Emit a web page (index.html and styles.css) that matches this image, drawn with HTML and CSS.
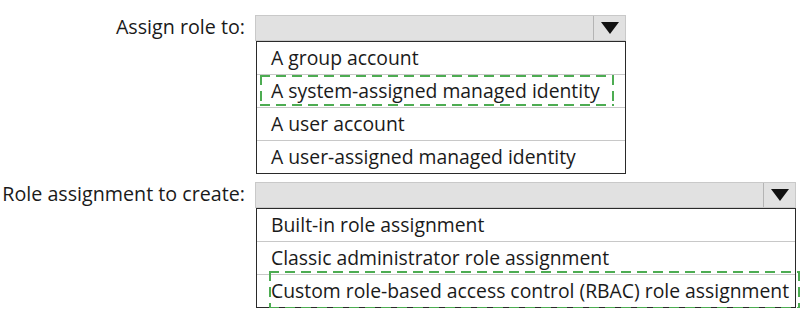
FILE: index.html
```html
<!DOCTYPE html>
<html>
<head>
  <link rel="stylesheet" href="styles.css">
</head>
<body>
  <div class="form">
    <div class="field field-first">
      <div class="label">Assign role to:</div>
      <div class="select select-short">
        <div class="bar">
          <span class="bar-value"></span>
          <span class="bar-arrow"></span>
        </div>
        <ul class="options">
          <li>A group account</li>
          <li class="answer answer-first">A system-assigned managed identity</li>
          <li>A user account</li>
          <li>A user-assigned managed identity</li>
        </ul>
      </div>
    </div>

    <div class="field field-second">
      <div class="label">Role assignment to create:</div>
      <div class="select select-long">
        <div class="bar">
          <span class="bar-value"></span>
          <span class="bar-arrow"></span>
        </div>
        <ul class="options">
          <li>Built-in role assignment</li>
          <li>Classic administrator role assignment</li>
          <li class="answer answer-second">Custom role-based access control (RBAC) role assignment</li>
        </ul>
      </div>
    </div>
  </div>
</body>
</html>
```

FILE: styles.css
```css
body {
  margin: 0;
  padding: 0;
  background-color: #fff;
  font-family: "Open Sans", "Noto Sans", sans-serif;
  color: #1a1a1a;
}

.form {
  padding-top: 15px;
}

.field {
  display: flex;
  align-items: flex-start;
}

.field-second {
  margin-top: 8px;
}

.label {
  width: 245px;
  text-align: right;
  font-size: 19.7px;
  line-height: 24px;
  padding-right: 10px;
  white-space: nowrap;
}

.select-short {
  width: 371px;
}

.select-long {
  width: 541px;
}

/* grey closed combobox */
.bar {
  display: flex;
  height: 24px;
  background-color: #e1e1e1;
  border: 1px solid #c9c9c9;
}

.bar-value {
  flex: 1;
}

.bar-arrow {
  width: 31px;
  border-left: 1px solid #b4b4b4;
  display: flex;
  align-items: center;
  justify-content: center;
}

.bar-arrow::after {
  content: "";
  width: 0;
  height: 0;
  border-left: 9px solid transparent;
  border-right: 9px solid transparent;
  border-top: 12px solid #111;
}

.options {
  list-style: none;
  margin: 0 0 0 1px;
  padding: 0;
  border: 1.5px solid #2a2a2a;
}

.options li {
  position: relative;
  height: 32px;
  line-height: 31px;
  padding-left: 14px;
  font-size: 19.35px;
  border-top: 1px solid #c8c8c8;
  white-space: nowrap;
}

.options li:first-child {
  border-top: none;
}

/* dashed green answer marker */
.answer::after {
  content: "";
  position: absolute;
  pointer-events: none;
  background-image:
    repeating-linear-gradient(90deg, #4dac52 0 10px, transparent 10px 16px),
    repeating-linear-gradient(90deg, #4dac52 0 10px, transparent 10px 16px),
    repeating-linear-gradient(180deg, #4dac52 0 10px, transparent 10px 16px),
    repeating-linear-gradient(180deg, #4dac52 0 10px, transparent 10px 16px);
  background-size: 100% 2px, 100% 2px, 2px 100%, 2px 100%;
  background-position: left top, left bottom, left top, right top;
  background-repeat: no-repeat;
}

.answer-first::after {
  left: 3px;
  top: 0;
  width: 354px;
  height: 31px;
}

.answer-second::after {
  left: 12px;
  top: -4px;
  width: 531px;
  height: 38px;
}
```
